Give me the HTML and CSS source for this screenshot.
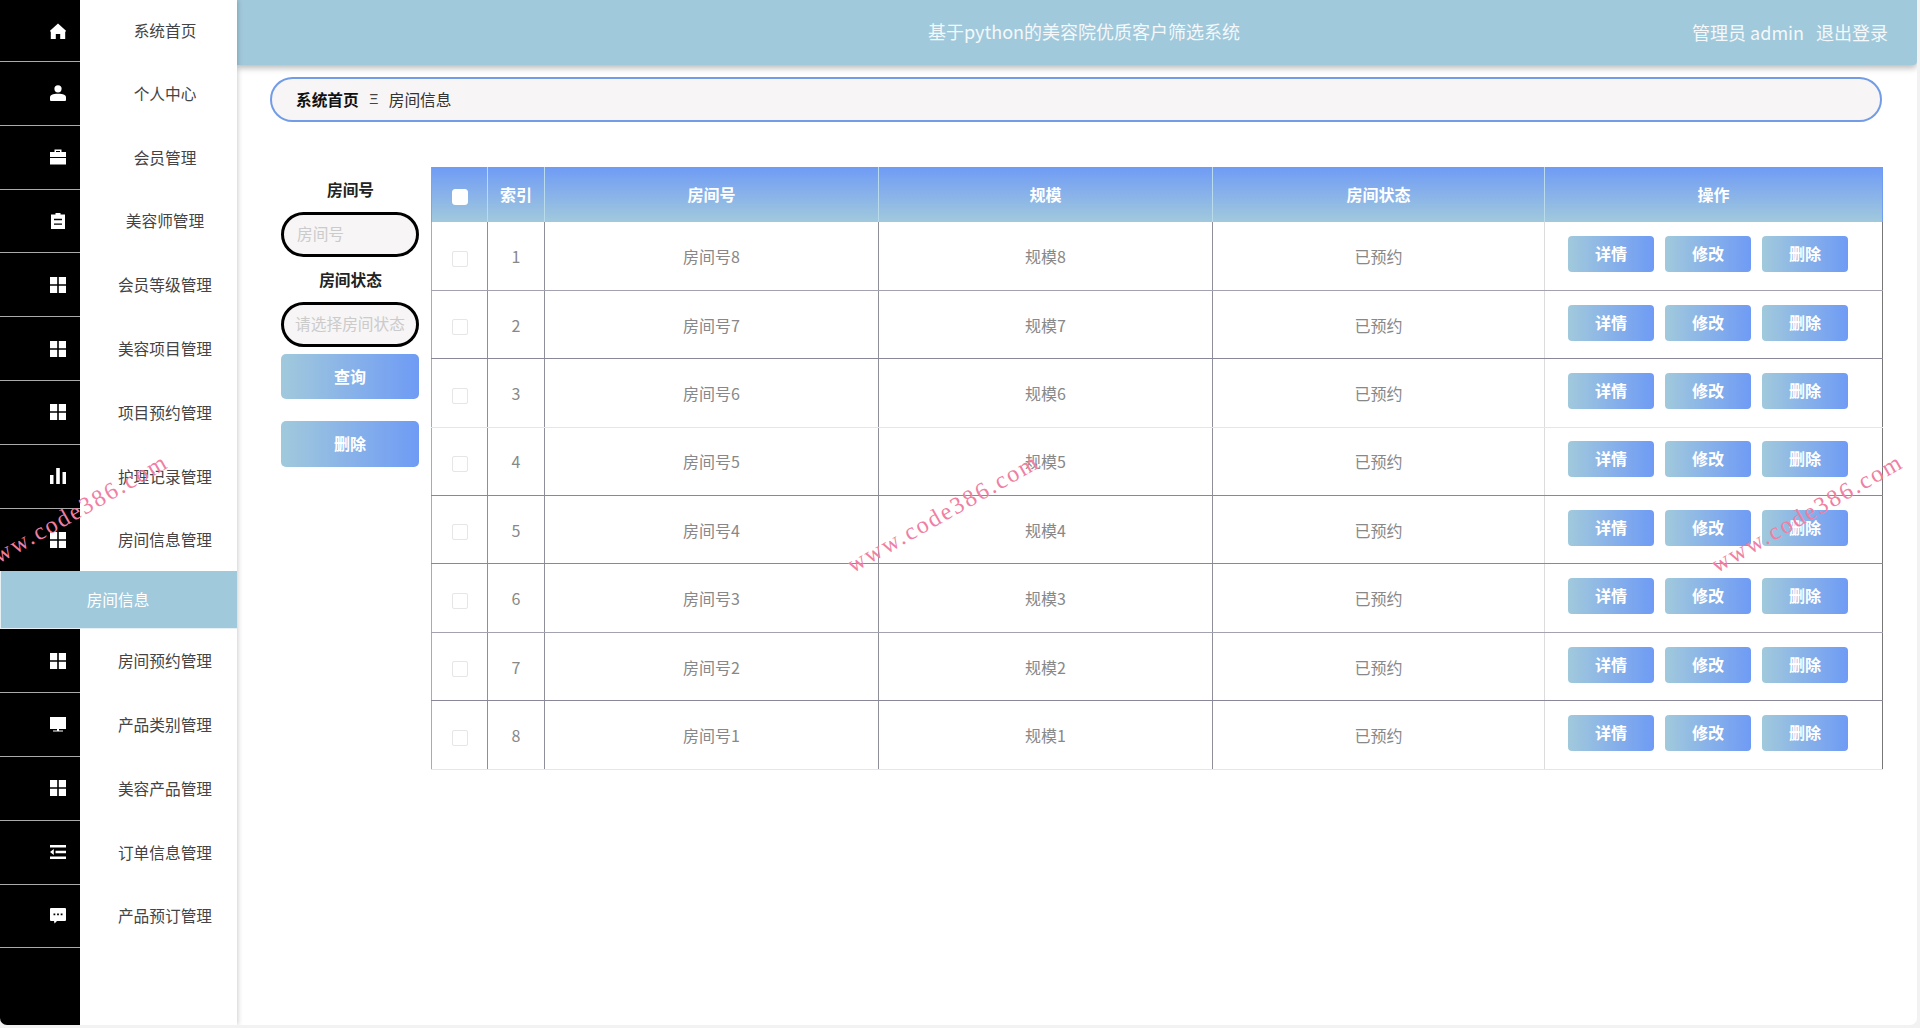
FILE: index.html
```html
<!DOCTYPE html>
<html lang="zh-CN">
<head>
<meta charset="utf-8">
<title>基于python的美容院优质客户筛选系统</title>
<link rel="stylesheet" href="styles.css">
</head>
<body>
<svg class="defs" width="0" height="0" aria-hidden="true">
  <symbol id="i-home" viewBox="0 0 16 16"><path d="M8 .4 0 7.800 .8 9.200V16h5v-5h4.400v5h5V9.200l.8-1.400Z"/></symbol>
  <symbol id="i-user" viewBox="0 0 16 16"><circle cx="8" cy="3.800" r="3.600"/><path d="M0 12.400C0 10.200 2.500 8.800 8 8.800s8 1.400 8 3.600V15a1 1 0 0 1-1 1H1a1 1 0 0 1-1-1Z"/></symbol>
  <symbol id="i-case" viewBox="0 0 16 16"><path fill-rule="evenodd" d="M4.500 3V.500h7V3H16v5H0V3ZM6 3h4V2H6ZM0 9h16v6.500H0Z"/></symbol>
  <symbol id="i-clip" viewBox="0 0 16 16"><path fill-rule="evenodd" d="M5.500 1.500V0h5v1.500H15V17.500H1V1.500Zm-1.500 4.300v1.400h8V5.800Zm0 4.600v1.400h8v-1.400Z"/></symbol>
  <symbol id="i-grid" viewBox="0 0 16 16"><path d="M0 0h7.200v7.200H0ZM8.800 0H16v7.200H8.800ZM0 8.800h7.200V16H0ZM8.800 8.800H16V16H8.800Z"/></symbol>
  <symbol id="i-bars" viewBox="0 0 16 16"><path d="M0 7h3.500v9H0ZM6.200 0h3.600v16H6.200ZM12.500 4H16v12h-3.500Z"/></symbol>
  <symbol id="i-desk" viewBox="0 0 16 16"><path d="M0 0h16v12H0ZM7 12h2v1.500h4v1H3v-1h4Z"/></symbol>
  <symbol id="i-list" viewBox="0 0 16 16"><path d="M0 1h16v2.400H0ZM5.500 6.800H16v2.400H5.500ZM0 12.600h16V15H0ZM3.800 5v6L0 8Z"/></symbol>
  <symbol id="i-chat" viewBox="0 0 16 16"><path fill-rule="evenodd" d="M1 0h14a1 1 0 0 1 1 1v11a1 1 0 0 1-1 1H7l-2.500 2.500-.5-2.500H1a1 1 0 0 1-1-1V1a1 1 0 0 1 1-1Zm2.500 5.500v1.800h1.800V5.500Zm3.600 0v1.800h1.800V5.500Zm3.600 0v1.800h1.800V5.500Z"/></symbol>
</svg>
<div class="app">
  <aside class="sidebar">
    <a class="nav-item nav-first"><span class="nav-icon"><svg class="ico"><use href="#i-home"/></svg></span><span class="nav-text">系统首页</span></a>
    <a class="nav-item"><span class="nav-icon"><svg class="ico"><use href="#i-user"/></svg></span><span class="nav-text">个人中心</span></a>
    <a class="nav-item"><span class="nav-icon"><svg class="ico"><use href="#i-case"/></svg></span><span class="nav-text">会员管理</span></a>
    <a class="nav-item"><span class="nav-icon"><svg class="ico"><use href="#i-clip"/></svg></span><span class="nav-text">美容师管理</span></a>
    <a class="nav-item"><span class="nav-icon"><svg class="ico"><use href="#i-grid"/></svg></span><span class="nav-text">会员等级管理</span></a>
    <a class="nav-item"><span class="nav-icon"><svg class="ico"><use href="#i-grid"/></svg></span><span class="nav-text">美容项目管理</span></a>
    <a class="nav-item"><span class="nav-icon"><svg class="ico"><use href="#i-grid"/></svg></span><span class="nav-text">项目预约管理</span></a>
    <a class="nav-item"><span class="nav-icon"><svg class="ico"><use href="#i-bars"/></svg></span><span class="nav-text">护理记录管理</span></a>
    <a class="nav-item nav-open"><span class="nav-icon"><svg class="ico"><use href="#i-grid"/></svg></span><span class="nav-text">房间信息管理</span></a>
    <a class="nav-sub">房间信息</a>
    <a class="nav-item"><span class="nav-icon"><svg class="ico"><use href="#i-grid"/></svg></span><span class="nav-text">房间预约管理</span></a>
    <a class="nav-item"><span class="nav-icon"><svg class="ico"><use href="#i-desk"/></svg></span><span class="nav-text">产品类别管理</span></a>
    <a class="nav-item"><span class="nav-icon"><svg class="ico"><use href="#i-grid"/></svg></span><span class="nav-text">美容产品管理</span></a>
    <a class="nav-item"><span class="nav-icon"><svg class="ico"><use href="#i-list"/></svg></span><span class="nav-text">订单信息管理</span></a>
    <a class="nav-item"><span class="nav-icon"><svg class="ico"><use href="#i-chat"/></svg></span><span class="nav-text">产品预订管理</span></a>
    <div class="rail-fill"></div>
  </aside>
  <main class="main">
    <header class="topbar">
      <div class="topbar-title">基于python的美容院优质客户筛选系统</div>
      <div class="topbar-user"><span>管理员 admin</span><span>退出登录</span></div>
    </header>
    <nav class="crumbs"><b class="crumb-home">系统首页</b><span class="crumb-sep">Ξ</span><span class="crumb-cur">房间信息</span></nav>
    <section class="content">
      <form class="filters">
        <label class="f-label">房间号</label>
        <div class="f-input f-placeholder-left">房间号</div>
        <label class="f-label">房间状态</label>
        <div class="f-input f-placeholder-center">请选择房间状态</div>
        <button type="button" class="btn-wide btn-query">查询</button>
        <button type="button" class="btn-wide btn-del">删除</button>
      </form>
      <table class="grid">
        <colgroup><col class="c1"><col class="c2"><col class="c3"><col class="c4"><col class="c5"><col class="c6"></colgroup>
        <thead>
          <tr><th><span class="check check-head"></span></th><th>索引</th><th>房间号</th><th>规模</th><th>房间状态</th><th>操作</th></tr>
        </thead>
        <tbody>
          <tr class="line-mid"><td><span class="check"></span></td><td>1</td><td>房间号8</td><td>规模8</td><td>已预约</td><td><div class="ops"><button type="button" class="op">详情</button><button type="button" class="op">修改</button><button type="button" class="op">删除</button></div></td></tr>
          <tr class="line-dark"><td><span class="check"></span></td><td>2</td><td>房间号7</td><td>规模7</td><td>已预约</td><td><div class="ops"><button type="button" class="op">详情</button><button type="button" class="op">修改</button><button type="button" class="op">删除</button></div></td></tr>
          <tr class="line-light"><td><span class="check"></span></td><td>3</td><td>房间号6</td><td>规模6</td><td>已预约</td><td><div class="ops"><button type="button" class="op">详情</button><button type="button" class="op">修改</button><button type="button" class="op">删除</button></div></td></tr>
          <tr class="line-dark"><td><span class="check"></span></td><td>4</td><td>房间号5</td><td>规模5</td><td>已预约</td><td><div class="ops"><button type="button" class="op">详情</button><button type="button" class="op">修改</button><button type="button" class="op">删除</button></div></td></tr>
          <tr class="line-dark"><td><span class="check"></span></td><td>5</td><td>房间号4</td><td>规模4</td><td>已预约</td><td><div class="ops"><button type="button" class="op">详情</button><button type="button" class="op">修改</button><button type="button" class="op">删除</button></div></td></tr>
          <tr class="line-mid"><td><span class="check"></span></td><td>6</td><td>房间号3</td><td>规模3</td><td>已预约</td><td><div class="ops"><button type="button" class="op">详情</button><button type="button" class="op">修改</button><button type="button" class="op">删除</button></div></td></tr>
          <tr class="line-dark"><td><span class="check"></span></td><td>7</td><td>房间号2</td><td>规模2</td><td>已预约</td><td><div class="ops"><button type="button" class="op">详情</button><button type="button" class="op">修改</button><button type="button" class="op">删除</button></div></td></tr>
          <tr class="line-light"><td><span class="check"></span></td><td>8</td><td>房间号1</td><td>规模1</td><td>已预约</td><td><div class="ops"><button type="button" class="op">详情</button><button type="button" class="op">修改</button><button type="button" class="op">删除</button></div></td></tr>
        </tbody>
      </table>
    </section>
  </main>
</div>
<div class="mark mark-1">www.code386.com</div>
<div class="mark mark-2">www.code386.com</div>
<div class="mark mark-3">www.code386.com</div>
</body>
</html>
```

FILE: styles.css
```css
* { box-sizing: border-box; }
html, body { margin: 0; padding: 0; height: 1028px; overflow: hidden; background: #f2f2f2; }
body { font-family: "Noto Sans CJK SC", "Noto Sans", sans-serif; font-size: 16px; color: #333; position: relative; }
.defs { position: absolute; }

.app { display: flex; width: 1917px; height: 1025px; background: #fff; border-radius: 0 0 7px 7px; overflow: hidden; }

.sidebar { width: 237px; flex: none; display: flex; flex-direction: column; background: #fff; box-shadow: 1px 0 5px rgba(0,0,0,.2); position: relative; z-index: 2; }
.nav-item { display: flex; height: 63.8px; flex: none; }
.nav-first { height: 62px; }
.nav-open { margin-bottom: -1px; }
.nav-icon { width: 80px; flex: none; background: #000; border-bottom: 1px solid #aaa; display: flex; align-items: center; padding-left: 50px; }
.nav-open .nav-icon { border-bottom: 0; }
.ico { width: 16px; height: 16px; fill: #fff; display: block; overflow: visible; }
.nav-text { flex: 1; padding: 0 0 1px 13px; display: flex; align-items: center; justify-content: center; color: #444; font-size: 15.7px; }
.nav-sub { height: 58px; flex: none; background: #a1c9dc; color: #fff; border-bottom: 1px solid #e6f0f5; border-left: 1px solid #e6f0f5; display: flex; align-items: center; justify-content: center; padding: 0 2px 1px 0; font-size: 15.7px; position: relative; }
.rail-fill { flex: 1; width: 80px; background: #000; }

.main { flex: 1; min-width: 0; display: flex; flex-direction: column; }
.topbar { height: 65px; flex: none; background: #a1c9dc; color: #f4f8fa; position: relative; border-bottom-right-radius: 4px; box-shadow: 0 3px 6px rgba(0,0,0,.28); display: flex; align-items: center; justify-content: flex-end; padding: 0 29px 2px 0; font-size: 18px; }
.topbar-title { position: absolute; left: 0; right: 0; text-align: center; padding-left: 14px; top: 19px; line-height: 24px; }
.topbar-user { display: flex; gap: 12px; line-height: 24px; }

.crumbs { height: 45px; margin: 12px 35px 0 33px; flex: none; border: 2px solid #739ce6; border-radius: 23px; background: #f7f5f5; display: flex; align-items: center; padding: 0 0 1px 24px; font-size: 15.7px; color: #333; }
.crumb-home { color: #111; font-weight: 700; }
.crumb-sep { width: 30px; text-align: center; color: #444; font-family: "Liberation Sans", sans-serif; font-size: 14px; }

.content { display: flex; margin: 45px 35px 0 44px; align-items: flex-start; }
.filters { width: 138px; flex: none; margin-right: 12px; display: flex; flex-direction: column; }
.f-label { height: 45px; display: flex; align-items: center; justify-content: center; padding: 0 0 0 1px; font-weight: 700; color: #222; font-size: 15.7px; }
.f-input { height: 45px; border: 3px solid #000; border-radius: 23px; background: #f7f5f5; color: #cbcbcb; display: flex; align-items: center; padding-bottom: 3px; font-size: 15.7px; }
.f-placeholder-left { padding-left: 13px; }
.f-placeholder-center { justify-content: center; white-space: nowrap; }
.btn-wide { height: 45px; width: 138px; border: 0; border-radius: 5px; background: linear-gradient(90deg, #a1c9dc, #6f9bf5); color: #fff; font: 700 16px "Noto Sans CJK SC", sans-serif; padding: 0 0 2px; }
.btn-query { margin-top: 7px; }
.btn-del { margin-top: 22px; height: 46px; }

.grid { width: 1451px; flex: none; table-layout: fixed; border-collapse: collapse; color: #888; font-size: 16px; }
.c1 { width: 56px; }
.c2 { width: 57px; }
.c3, .c4 { width: 334px; }
.c5 { width: 332px; }
.c6 { width: 338px; }
.grid th { height: 55px; padding: 0 0 1px; font-weight: 700; color: #fff; background: linear-gradient(180deg, #6f9bf5, #a1c9dc); border-left: 1px solid #b9dcec; border-right: 1px solid #b9dcec; text-align: center; }
.grid th:first-child { border-left-color: #8aa0d8; }
.grid th:last-child { border-right-color: #6f9bf5; }
.grid td { height: 68.4px; padding: 0; text-align: center; border-left: 1px solid #8f8f99; border-right: 1px solid #8f8f99; border-bottom: 1px solid #999; }
.grid td:first-child { border-left-color: #a9a9bd; }
.grid td:nth-child(5) { border-right-color: #dcdcdc; }
.grid td:last-child { border-left-color: #dcdcdc; border-right-color: #777; }
.grid .line-mid td { border-bottom-color: #a2a2b0; }
.grid .line-dark td { border-bottom-color: #88889a; }
.grid .line-light td { border-bottom-color: #e6e6e8; }

.check { display: inline-block; width: 16px; height: 16px; border: 1px solid #e6e6e6; border-radius: 2px; background: #fff; vertical-align: middle; }
.check-head { border-color: #fff; border-radius: 3px; }

.ops { display: flex; gap: 11px; padding: 0 0 4px 23px; }
.op { width: 86px; height: 36px; border: 0; border-radius: 4px; background: linear-gradient(90deg, #a1c9dc, #6f9bf5); color: #fff; font: 700 16px "Noto Sans CJK SC", sans-serif; padding: 0 0 2px; }

.mark { position: absolute; width: 260px; text-align: center; font-family: "Liberation Serif", serif; font-size: 24px; letter-spacing: 2.1px; color: #f07fa3; line-height: 30px; transform: rotate(-29.500deg); pointer-events: none; white-space: nowrap; z-index: 5; }
.mark-1 { left: -58px; top: 498px; }
.mark-2 { left: 813px; top: 498px; }
.mark-3 { left: 1677px; top: 498px; }
```
